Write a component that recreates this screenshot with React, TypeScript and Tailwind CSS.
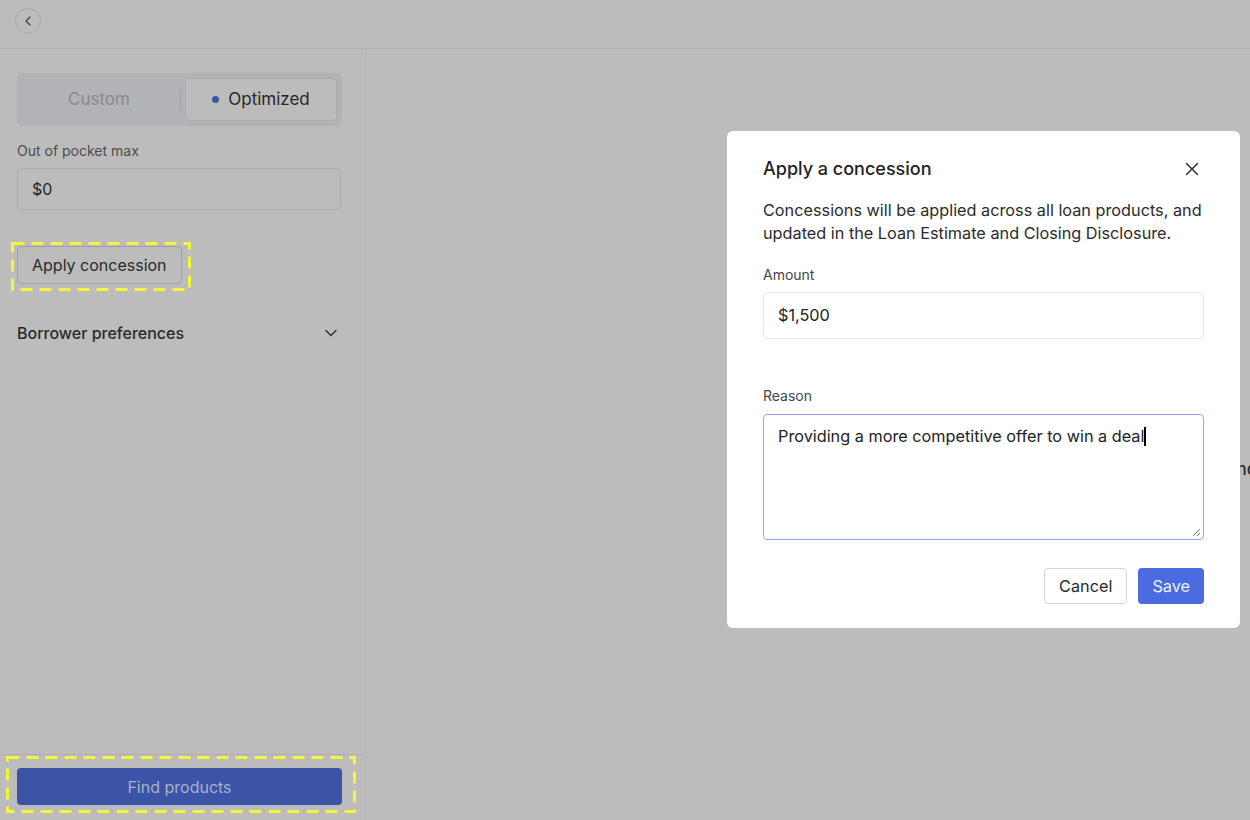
import React from 'react';
import { ChevronLeft, ChevronDown, X } from 'lucide-react';

const font = { fontFamily: 'Inter, "Liberation Sans", sans-serif' };

// yellow dashed annotation box, drawn over its child
const Dashed: React.FC<{ className?: string; children: React.ReactNode }> = ({ className, children }) => (
  <div className={`relative ${className ?? ''}`}>
    {children}
    <svg className="absolute inset-0 w-full h-full pointer-events-none overflow-visible">
      <rect x="1.5" y="1.5" width="calc(100% - 3px)" height="calc(100% - 3px)" fill="none" stroke="#f5f53c" strokeWidth="3" strokeDasharray="12 7" />
    </svg>
  </div>
);

export default function App() {
  return (
    <div className="w-[1250px] h-[820px] bg-[#bcbcbc] flex flex-col overflow-hidden relative text-[#262626]" style={font}>
      {/* Top bar */}
      <div className="h-[49px] shrink-0 border-b border-[#b0b0b0] flex items-start pt-[8px] pl-[15px]">
        <button className="w-[26px] h-[26px] rounded-full border border-[#a6a6a6] flex items-center justify-center text-[#3a3a3a]">
          <ChevronLeft className="w-4 h-4" strokeWidth={1.75} />
        </button>
      </div>

      <div className="flex flex-1 min-h-0">
        {/* Sidebar */}
        <aside className="w-[366px] shrink-0 border-r border-[#b3b3b3] flex flex-col">
          <div className="flex-1 pl-[17px] pr-[24px] pt-[24px]">
            <div className="h-[53px] w-[325px] bg-[#b2b3b8] rounded-[5px] flex items-center p-[5px]">
              <div className="flex-1 h-full flex items-center justify-center text-[17px] text-[#8a8a8a]">Custom</div>
              <div className="w-px h-[22px] bg-[#a3a3a3] mx-[4px]" />
              <div className="w-[152px] h-full bg-[#bcbcbc] border border-[#acacac] rounded-[4px] flex items-center justify-center gap-[9px] text-[17px] text-[#262626]">
                <span className="w-[7px] h-[7px] rounded-full bg-[#3b55a8]" />
                Optimized
              </div>
            </div>

            <div className="mt-[16px] text-[14px] text-[#4d4d4d] leading-[18px]">Out of pocket max</div>
            <div className="mt-[8px] h-[42px] border border-[#a8abb0] rounded-[4px] flex items-center px-[14px] text-[16px]">$0</div>

            <Dashed className="mt-[32px] -ml-[6px] w-[180px] h-[49px] p-[4px] pl-[6px]">
              <button className="h-[38px] px-[14px] border border-[#a0a0a0] rounded-[4px] text-[16px] text-[#2a2a2a] bg-[#bcbcbc]">Apply concession</button>
            </Dashed>

            <div className="mt-[30px] flex items-center justify-between">
              <span className="text-[16px] font-medium text-[#2a2a2a]">Borrower preferences</span>
              <ChevronDown className="w-5 h-5 text-[#333]" strokeWidth={1.75} />
            </div>
          </div>

          <div className="h-[66px] border-t border-[#b0b0b0] pl-[6px] pt-[1px]">
            <Dashed className="w-[350px] h-[57px] pt-[12px] pl-[11px]">
              <button className="w-[325px] h-[37px] rounded-[4px] bg-[#3b54a8] text-[16px] text-[#a9b0c9]">Find products</button>
            </Dashed>
          </div>
        </aside>

        {/* Main content (behind modal) */}
        <main className="flex-1 pt-[408px] pl-[764px] whitespace-nowrap">
          <span className="text-[17px] font-medium text-[#2a2a2a]">Pricing guidance</span>
        </main>
      </div>

      {/* Modal */}
      <div className="absolute left-[727px] top-[131px] w-[513px] h-[497px] bg-white rounded-[6px] px-[36px] pt-[26px]">
        <div className="flex items-center justify-between">
          <h2 className="text-[18px] font-medium text-[#222] leading-[24px]">Apply a concession</h2>
          <X className="w-[22px] h-[22px] text-[#333] mr-[1px]" strokeWidth={1.6} />
        </div>
        <p className="mt-[18px] text-[16.25px] leading-[23px] text-[#2b2b2b]">
          Concessions will be applied across all loan products, and updated in the Loan Estimate and Closing Disclosure.
        </p>

        <div className="mt-[21px] text-[14px] text-[#444] leading-[18px]">Amount</div>
        <div className="mt-[8px] h-[47px] border border-[#e3e6eb] rounded-[4px] flex items-center px-[14px] text-[16.25px] text-[#222]">$1,500</div>

        <div className="mt-[48px] text-[14px] text-[#444] leading-[18px]">Reason</div>
        <div className="mt-[9px] h-[126px] border border-[#8fa6ee] rounded-[4px] px-[14px] pt-[9px] text-[16.25px] text-[#222] relative">
          <span>Providing a more competitive offer to win a deal</span>
          <span className="inline-block w-[2px] h-[19px] bg-black align-[-4px]" />
          <svg className="absolute right-[2px] bottom-[2px]" width="10" height="10" viewBox="0 0 10 10">
            <path d="M9 2 L2 9 M9 6 L6 9" stroke="#777" strokeWidth="1" />
          </svg>
        </div>

        <div className="mt-[28px] flex justify-end gap-[11px]">
          <button className="h-[36px] px-[14px] border border-[#d3d6db] rounded-[4px] text-[16.25px] text-[#2a2a2a] bg-white">Cancel</button>
          <button className="h-[36px] px-[14px] rounded-[4px] text-[16.25px] text-[#eef1fb] bg-[#4b6be0]">Save</button>
        </div>
      </div>
    </div>
  );
}
